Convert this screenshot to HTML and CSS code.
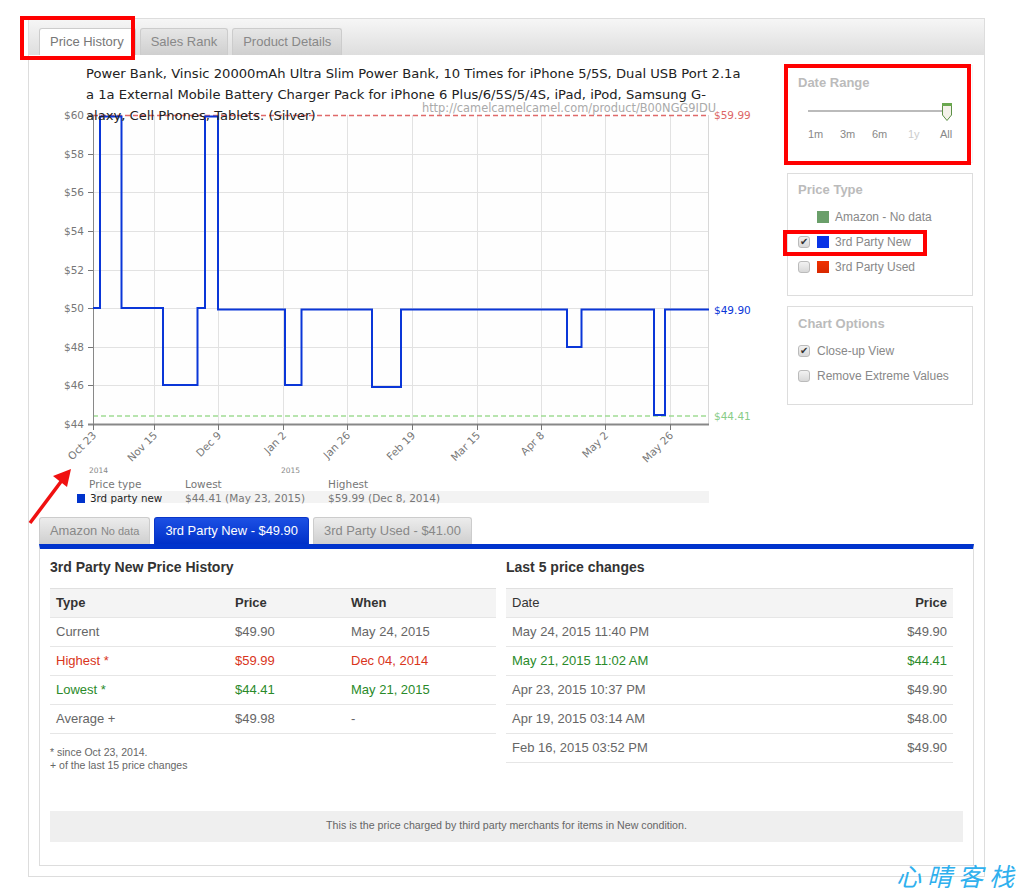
FILE: index.html
```html
<!DOCTYPE html>
<html lang="en">
<head>
    <meta charset="UTF-8">
    <title>Price History</title>
    <link rel="stylesheet" href="styles.css">
</head>
<body>
    <div class="wrap">
        <div class="top-tabs">
            <a class="top-tab active">Price History</a>
            <a class="top-tab">Sales Rank</a>
            <a class="top-tab">Product Details</a>
        </div>

        <div class="main">
            <div class="chart-col">
                <div class="chart-title">Power Bank, Vinsic 20000mAh Ultra Slim Power Bank, 10 Times for iPhone 5/5S, Dual USB Port 2.1a<br>a 1a External Mobile Battery Charger Pack for iPhone 6 Plus/6/5S/5/4S, iPad, iPod, Samsung G-<br>alaxy, Cell Phones, Tablets. (Silver)</div>
                <!-- viewBox uses page coordinates -->
                <svg class="chart" width="745" height="462" viewBox="40 55 745 462">
                    <rect x="93" y="115" width="616" height="309" fill="#fefefe"/>
                    <g stroke="#e2e2e2" stroke-width="1">
                        <path d="M93 154.500H709M93 192.500H709M93 231.500H709M93 270.500H709M93 308.500H709M93 347.500H709M93 385.500H709"/>
                        <path d="M154.500 115V424M218.500 115V424M283.500 115V424M347.500 115V424M412.500 115V424M477.500 115V424M541.500 115V424M605.500 115V424M670.500 115V424"/>
                    </g>
                    <path d="M708.500 115V424" stroke="#d8d8d8"/>
                    <path d="M93 115.500H709" stroke="#e06a6a" stroke-width="1.500" stroke-dasharray="5 3"/>
                    <path d="M93 416H709" stroke="#a0dc94" stroke-width="1.500" stroke-dasharray="5 3"/>
                    <path d="M93.500 115V425" stroke="#888" stroke-width="1"/>
                    <path d="M88 424.500H709" stroke="#888" stroke-width="2"/>
                    <path d="M88 115.500H93M88 154.500H93M88 192.500H93M88 231.500H93M88 270.500H93M88 308.500H93M88 347.500H93M88 385.500H93" stroke="#777"/>
                    <path d="M93.500 424V430M154.500 424V430M218.500 424V430M283.500 424V430M347.500 424V430M412.500 424V430M477.500 424V430M541.500 424V430M605.500 424V430M670.500 424V430" stroke="#777"/>
                    <path class="price-line" d="M93 308H100V116.500H121.500V308H163V385H197.500V308H205V116.500H218V309.500H285V385H301.500V309.500H372V387H401V309.500H567V347H581.500V309.500H654V415H665V309.500H709"/>

                    <g class="axis-y">
                        <text x="84" y="119">$60</text>
                        <text x="84" y="158">$58</text>
                        <text x="84" y="196">$56</text>
                        <text x="84" y="235">$54</text>
                        <text x="84" y="274">$52</text>
                        <text x="84" y="312">$50</text>
                        <text x="84" y="351">$48</text>
                        <text x="84" y="389">$46</text>
                        <text x="84" y="428">$44</text>
                    </g>
                    <g class="axis-x">
                        <text transform="translate(97 436) rotate(-45)">Oct 23</text>
                        <text transform="translate(158 436) rotate(-45)">Nov 15</text>
                        <text transform="translate(222 436) rotate(-45)">Dec 9</text>
                        <text transform="translate(287 436) rotate(-45)">Jan 2</text>
                        <text transform="translate(351 436) rotate(-45)">Jan 26</text>
                        <text transform="translate(416 436) rotate(-45)">Feb 19</text>
                        <text transform="translate(481 436) rotate(-45)">Mar 15</text>
                        <text transform="translate(545 436) rotate(-45)">Apr 8</text>
                        <text transform="translate(609 436) rotate(-45)">May 2</text>
                        <text transform="translate(674 436) rotate(-45)">May 26</text>
                    </g>
                    <text class="year" x="89" y="473">2014</text>
                    <text class="year" x="281" y="473">2015</text>

                    <text class="url" x="716" y="112">http://camelcamelcamel.com/product/B00NGG9IDU</text>
                    <text class="side-val red" x="714" y="119">$59.99</text>
                    <text class="side-val blue" x="714" y="314">$49.90</text>
                    <text class="side-val green" x="714" y="420">$44.41</text>

                    <rect x="95" y="491" width="614" height="12" fill="#f3f3f3"/>
                    <rect x="77" y="494" width="8" height="9" fill="#0033cc"/>
                    <g class="legend">
                        <text x="89" y="488">Price type</text>
                        <text x="185" y="488">Lowest</text>
                        <text x="328" y="488">Highest</text>
                        <text class="legend-name" x="90" y="502">3rd party new</text>
                        <text x="185" y="502">$44.41 (May 23, 2015)</text>
                        <text x="328" y="502">$59.99 (Dec 8, 2014)</text>
                    </g>
                </svg>
            </div>

            <div class="side">
                <div class="side-box range-box">
                    <h4>Date Range</h4>
                    <div class="slider">
                        <div class="slider-track"></div>
                        <svg class="slider-thumb" width="12" height="20" viewBox="0 0 12 20">
                            <path d="M1.500 1.500H10.500V13L6 18.500L1.500 13Z" fill="#f4f2ea" stroke="#5d9147"/>
                            <path d="M1 1H11V4H1Z" fill="#6aa84f"/>
                        </svg>
                    </div>
                    <div class="range-labels">
                        <span>1m</span><span>3m</span><span>6m</span><span class="off">1y</span><span>All</span>
                    </div>
                </div>

                <div class="side-box type-box">
                    <h4>Price Type</h4>
                    <div class="opt"><span class="chk none"></span><span class="swatch sw-green"></span>Amazon - No data</div>
                    <div class="opt"><span class="chk on"></span><span class="swatch sw-blue"></span>3rd Party New</div>
                    <div class="opt"><span class="chk"></span><span class="swatch sw-red"></span>3rd Party Used</div>
                </div>

                <div class="side-box options-box">
                    <h4>Chart Options</h4>
                    <div class="opt"><span class="chk on"></span>Close-up View</div>
                    <div class="opt"><span class="chk"></span>Remove Extreme Values</div>
                </div>
            </div>
        </div>

        <div class="lower">
            <div class="low-tabs">
                <a class="low-tab">Amazon <small>No data</small></a>
                <a class="low-tab active">3rd Party New - $49.90</a>
                <a class="low-tab">3rd Party Used - $41.00</a>
            </div>
            <div class="low-body">
                <div class="tables">
                    <div>
                        <h3>3rd Party New Price History</h3>
                        <table class="hist">
                            <tr><th>Type</th><th>Price</th><th>When</th></tr>
                            <tr><td>Current</td><td>$49.90</td><td>May 24, 2015</td></tr>
                            <tr class="high"><td>Highest *</td><td>$59.99</td><td>Dec 04, 2014</td></tr>
                            <tr class="low"><td>Lowest *</td><td>$44.41</td><td>May 21, 2015</td></tr>
                            <tr><td>Average +</td><td>$49.98</td><td>-</td></tr>
                        </table>
                        <p class="foot">* since Oct 23, 2014.<br>+ of the last 15 price changes</p>
                    </div>
                    <div>
                        <h3>Last 5 price changes</h3>
                        <table class="changes">
                            <tr><th>Date</th><th>Price</th></tr>
                            <tr><td>May 24, 2015 11:40 PM</td><td>$49.90</td></tr>
                            <tr class="low"><td>May 21, 2015 11:02 AM</td><td>$44.41</td></tr>
                            <tr><td>Apr 23, 2015 10:37 PM</td><td>$49.90</td></tr>
                            <tr><td>Apr 19, 2015 03:14 AM</td><td>$48.00</td></tr>
                            <tr><td>Feb 16, 2015 03:52 PM</td><td>$49.90</td></tr>
                        </table>
                    </div>
                </div>
                <div class="note">This is the price charged by third party merchants for items in New condition.</div>
            </div>
        </div>
    </div>

    <!-- Red annotations on top of the screenshot -->
    <div class="mark mark-tab"></div>
    <div class="mark mark-range"></div>
    <div class="mark mark-new"></div>
    <svg class="mark-arrow" width="50" height="62" viewBox="0 0 50 62">
        <path d="M3 58L36 14" stroke="#f01010" stroke-width="3.500"/>
        <path d="M44 4L40 22L26 11Z" fill="#f01010"/>
    </svg>
    <div class="watermark">心晴客栈</div>
</body>
</html>
```

FILE: styles.css
```css
body {
    margin: 0;
    font-family: "Liberation Sans", Arial, sans-serif;
    font-size: 12px;
    color: #666;
    background-color: #fff;
    height: 892px;
    overflow: hidden;
    position: relative;
}

.wrap {
    box-sizing: border-box;
    width: 957px;
    height: 859px;
    margin: 18px 0 0 28px;
    border: 1px solid #ddd;
}

/* Top tabs */
.top-tabs {
    display: flex;
    gap: 4px;
    height: 36px;
    box-sizing: border-box;
    padding: 9px 0 0 10px;
    background: linear-gradient(#f6f6f6, #dedede);
}

.top-tab {
    box-sizing: border-box;
    height: 27px;
    padding: 0 10px;
    line-height: 26px;
    font-size: 13px;
    color: #888;
    background: linear-gradient(#e6e6e6, #cfcfcf);
    border: 1px solid #ccc;
    border-bottom: none;
    border-radius: 3px 3px 0 0;
}

.top-tab.active {
    padding-right: 11px;
    background: #fff;
    color: #777;
}

/* Chart and side options */
.main {
    display: flex;
    height: 462px;
}

.chart-col {
    position: relative;
    width: 747px;
    padding-left: 11px;
}

.chart {
    display: block;
}

.chart-title {
    position: absolute;
    left: 57px;
    top: 8px;
    white-space: nowrap;
    font-family: "DejaVu Sans", sans-serif;
    font-size: 13.130px;
    line-height: 21px;
    color: #222;
}

.price-line {
    fill: none;
    stroke: #0a36d8;
    stroke-width: 2;
}

.axis-y text {
    font-family: "DejaVu Sans", sans-serif;
    font-size: 10.500px;
    fill: #777;
    text-anchor: end;
}

.axis-x text {
    font-family: "DejaVu Sans", sans-serif;
    font-size: 10.500px;
    fill: #777;
    text-anchor: end;
}

.year {
    font-family: "DejaVu Sans", sans-serif;
    font-size: 7.500px;
    fill: #888;
}

.url {
    font-family: "DejaVu Sans", sans-serif;
    font-size: 11.400px;
    fill: #aaa;
    text-anchor: end;
}

.side-val {
    font-family: "DejaVu Sans", sans-serif;
    font-size: 10.500px;
}

.side-val.red {
    fill: #d66;
}

.side-val.blue {
    fill: #0a36d8;
}

.side-val.green {
    fill: #8c8;
}

.legend text {
    font-family: "DejaVu Sans", sans-serif;
    font-size: 10.500px;
    fill: #777;
}

.legend .legend-name {
    font-size: 10.300px;
    fill: #222;
}

.side {
    width: 186px;
    padding-top: 10px;
}

.side-box {
    box-sizing: border-box;
    width: 186px;
    margin-bottom: 10px;
    padding: 9px 10px 0;
    border: 1px solid #ddd;
}

.side-box h4 {
    margin: 0 0 7px;
    font-size: 13px;
    line-height: 15px;
    color: #bbb;
}

.range-box {
    height: 98px;
    border-color: #f4f4f4;
}

.range-box h4 {
    margin-bottom: 13px;
}

.type-box {
    height: 123px;
    padding-top: 8px;
}

.options-box {
    height: 99px;
}

.slider {
    position: relative;
    height: 20px;
    margin-top: -1px;
}

.slider-track {
    position: absolute;
    left: 10px;
    top: 8px;
    width: 135px;
    height: 2px;
    background-color: #bbb;
}

.slider-thumb {
    position: absolute;
    left: 143px;
    top: 0;
}

.range-labels {
    display: grid;
    grid-template-columns: 32px 32px 36px 32px auto;
    margin: 6px 0 0 10px;
    font-size: 11px;
    color: #888;
}

.range-labels .off {
    color: #ccc;
}

.opt {
    display: flex;
    align-items: center;
    height: 25px;
    color: #888;
}

.chk {
    box-sizing: border-box;
    width: 12px;
    height: 12px;
    margin-right: 7px;
    border: 1px solid #bbb;
    border-radius: 3px;
    background: linear-gradient(#f2f2f2, #d8d8d8);
    font-size: 10px;
    line-height: 10px;
    text-align: center;
    color: #333;
}

.chk.on::after {
    content: "\2714";
}

.chk.none {
    visibility: hidden;
}

.swatch {
    width: 12px;
    height: 12px;
    margin-right: 6px;
}

.sw-green {
    background-color: #6a9f6a;
}

.sw-blue {
    background-color: #0a34e6;
}

.sw-red {
    background: linear-gradient(#f03000, #d82800);
}

/* Lower section */
.lower {
    width: 935px;
    margin: 0 0 0 10px;
}

.low-tabs {
    display: flex;
    gap: 4px;
    height: 27px;
}

.low-tab {
    box-sizing: border-box;
    height: 27px;
    padding: 0 10px;
    line-height: 25px;
    font-size: 12.900px;
    color: #888;
    background: linear-gradient(#ececec, #cfcfcf);
    border: 1px solid #ccc;
    border-bottom: none;
    border-radius: 3px 3px 0 0;
}

.low-tab small {
    font-size: 11px;
}

.low-tab.active {
    color: #fff;
    border-color: #0a36c8;
    background: linear-gradient(#1c50e4, #0030c8);
}

.low-body {
    box-sizing: border-box;
    height: 322px;
    padding: 0 10px;
    border: 1px solid #ddd;
    border-top: 5px solid #0033cc;
}

.tables {
    display: grid;
    grid-template-columns: 446px 447px;
    gap: 10px;
    height: 262px;
}

.low-body h3 {
    margin: 10px 0 12px;
    font-size: 14px;
    line-height: 17px;
    color: #333;
}

table {
    width: 100%;
    border-collapse: collapse;
    font-size: 13px;
}

th, td {
    box-sizing: border-box;
    height: 29px;
    padding: 0 6px 2px;
    text-align: left;
    border-bottom: 1px solid #e6e6e6;
}

th {
    color: #333;
    font-weight: bold;
    background-color: #f4f4f4;
    border-top: 1px solid #e0e0e0;
}

.hist th:nth-child(1) {
    width: 179px;
}

.hist th:nth-child(2) {
    width: 116px;
}

.changes th:nth-child(2), .changes td:nth-child(2) {
    text-align: right;
}

.changes th:first-child {
    font-weight: normal;
}

.high td {
    color: #d9351c;
}

.low td {
    color: #2a8a2a;
}

.foot {
    margin: 12px 0 0;
    font-size: 10.500px;
    line-height: 13px;
}

.note {
    height: 31px;
    line-height: 28px;
    text-align: center;
    font-size: 10.650px;
    background-color: #efefef;
}

/* Annotations */
.mark {
    position: absolute;
    box-sizing: border-box;
    border: 4px solid #f00;
}

.mark-tab {
    left: 20px;
    top: 16px;
    width: 115px;
    height: 44px;
}

.mark-range {
    left: 784px;
    top: 64px;
    width: 187px;
    height: 101px;
}

.mark-new {
    left: 783px;
    top: 230px;
    width: 144px;
    height: 26px;
}

.mark-arrow {
    position: absolute;
    left: 27px;
    top: 465px;
}

.watermark {
    position: absolute;
    left: 896px;
    top: 861px;
    font-family: "Noto Sans CJK SC", sans-serif;
    font-size: 25px;
    line-height: 28px;
    letter-spacing: 6px;
    font-style: italic;
    color: #2fb0ee;
}
```
